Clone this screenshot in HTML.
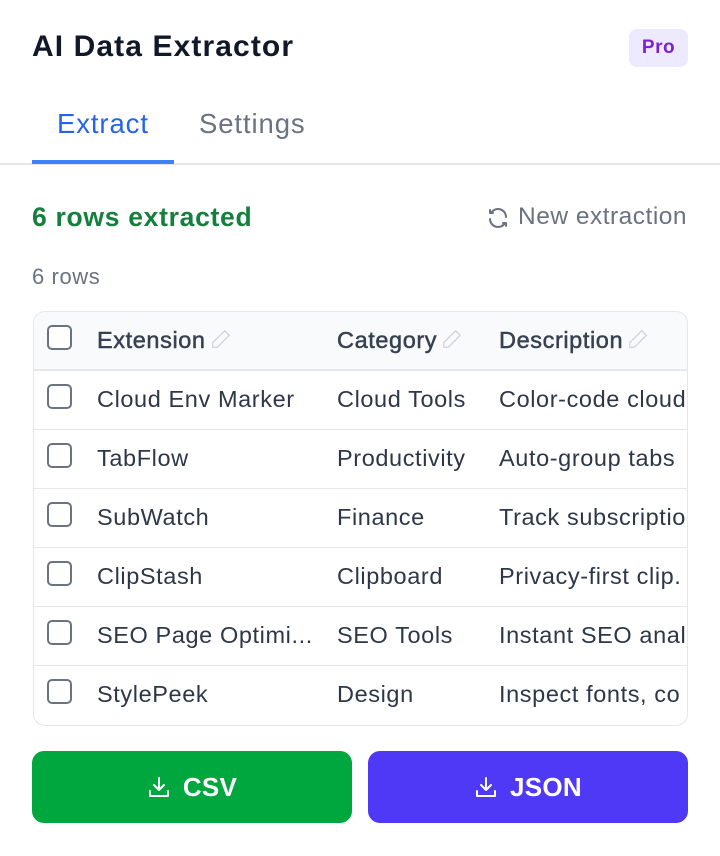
<!DOCTYPE html><html><head><style>
body{margin:0;width:720px;height:856px;background:#fff;font-family:"Liberation Sans",sans-serif;position:relative;overflow:hidden;color:#1f2937;letter-spacing:0.6px}
.a{position:absolute;white-space:nowrap}
.cb{position:absolute;width:25px;height:25px;border:2px solid #6b7280;border-radius:5px;box-sizing:border-box;background:#fff}
.row{position:absolute;left:0;width:654px;height:59px;border-bottom:1.5px solid #e5e7eb;box-sizing:border-box}
.row span{position:absolute;top:15px;font-size:23.5px;color:#2d3748;white-space:nowrap}
.row .h{color:#374151;letter-spacing:0.6px;-webkit-text-stroke:0.5px #374151}
.pen{display:inline-block;vertical-align:-2px;margin-left:4px}
.btn{position:absolute;top:751px;height:72px;width:320px;border-radius:12px;color:#fff;font-weight:bold;font-size:26px;display:flex;align-items:center;justify-content:center;gap:12px;letter-spacing:0.3px}
</style></head><body>
<div class="a" style="left:32px;top:30px;font-size:30px;font-weight:bold;color:#111827;letter-spacing:1.1px">AI Data Extractor</div>
<div class="a" style="left:629px;top:29px;width:59px;height:38px;background:#ede9fe;border-radius:8px;color:#7e22ce;font-weight:bold;font-size:19px;text-align:center;line-height:38px;letter-spacing:0.5px">Pro</div>
<div class="a" style="left:57px;top:108px;font-size:27.5px;color:#2563eb;letter-spacing:0.9px">Extract</div>
<div class="a" style="left:199px;top:108px;font-size:27.5px;color:#6b7280;letter-spacing:0.9px">Settings</div>
<div class="a" style="left:0;top:163px;width:720px;height:2px;background:#e5e7eb"></div>
<div class="a" style="left:32px;top:160px;width:142px;height:4px;background:#3b82f6"></div>
<div class="a" style="left:32px;top:202px;font-size:26.5px;font-weight:bold;color:#15803d;letter-spacing:0.7px">6 rows extracted</div>
<svg class="a" style="left:486px;top:206px" width="24" height="24" viewBox="0 0 24 24" fill="none" stroke="#6b7280" stroke-width="2" stroke-linecap="round" stroke-linejoin="round"><path d="M20 11a8 8 0 0 0-14.6-4.5M4 4v3h3M4 13a8 8 0 0 0 14.6 4.5M20 20v-3h-3"/></svg>
<div class="a" style="left:518px;top:203px;font-size:24.5px;color:#6b7280;letter-spacing:0.5px">New extraction</div>
<div class="a" style="left:32px;top:264px;font-size:22px;color:#6b7280">6 rows</div>
<div class="a" style="left:33px;top:311px;width:655px;height:415px;border:1.5px solid #e5e7eb;border-radius:12px;box-sizing:border-box;overflow:hidden">
<div class="row" style="top:0;background:#f9fafb;border-bottom:2px solid #e5e7eb"><div class="cb" style="left:13px;top:13px"></div>
<span class="h" style="left:63px">Extension<svg class="pen" width="22" height="22" viewBox="0 0 24 24" fill="none" stroke="#d1d5db" stroke-width="1.5" stroke-linejoin="round"><path d="M16 3l5 5L8 21H3v-5z"/></svg></span>
<span class="h" style="left:303px">Category<svg class="pen" width="22" height="22" viewBox="0 0 24 24" fill="none" stroke="#d1d5db" stroke-width="1.5" stroke-linejoin="round"><path d="M16 3l5 5L8 21H3v-5z"/></svg></span>
<span class="h" style="left:465px">Description<svg class="pen" width="22" height="22" viewBox="0 0 24 24" fill="none" stroke="#d1d5db" stroke-width="1.5" stroke-linejoin="round"><path d="M16 3l5 5L8 21H3v-5z"/></svg></span></div>
<div class="row" style="top:59px"><div class="cb" style="left:13px;top:13px"></div><span style="left:63px">Cloud Env Marker</span><span style="left:303px">Cloud Tools</span><span style="left:465px">Color-code cloud</span></div>
<div class="row" style="top:118px"><div class="cb" style="left:13px;top:13px"></div><span style="left:63px">TabFlow</span><span style="left:303px">Productivity</span><span style="left:465px">Auto-group tabs</span></div>
<div class="row" style="top:177px"><div class="cb" style="left:13px;top:13px"></div><span style="left:63px">SubWatch</span><span style="left:303px">Finance</span><span style="left:465px">Track subscriptio</span></div>
<div class="row" style="top:236px"><div class="cb" style="left:13px;top:13px"></div><span style="left:63px">ClipStash</span><span style="left:303px">Clipboard</span><span style="left:465px">Privacy-first clip.</span></div>
<div class="row" style="top:295px"><div class="cb" style="left:13px;top:13px"></div><span style="left:63px">SEO Page Optimi...</span><span style="left:303px">SEO Tools</span><span style="left:465px">Instant SEO anal</span></div>
<div class="row" style="top:354px;border:none"><div class="cb" style="left:13px;top:13px"></div><span style="left:63px">StylePeek</span><span style="left:303px">Design</span><span style="left:465px">Inspect fonts, co</span></div>
</div>
<div class="btn" style="left:32px;background:#00a63e"><svg width="24" height="24" viewBox="0 0 24 24" fill="none" stroke="#fff" stroke-width="2" stroke-linecap="round" stroke-linejoin="round"><path d="M12 3v11M7 10l5 5 5-5M3 16v5h18v-5"/></svg>CSV</div>
<div class="btn" style="left:368px;background:#4f39f6"><svg width="24" height="24" viewBox="0 0 24 24" fill="none" stroke="#fff" stroke-width="2" stroke-linecap="round" stroke-linejoin="round"><path d="M12 3v11M7 10l5 5 5-5M3 16v5h18v-5"/></svg>JSON</div>
</body></html>
